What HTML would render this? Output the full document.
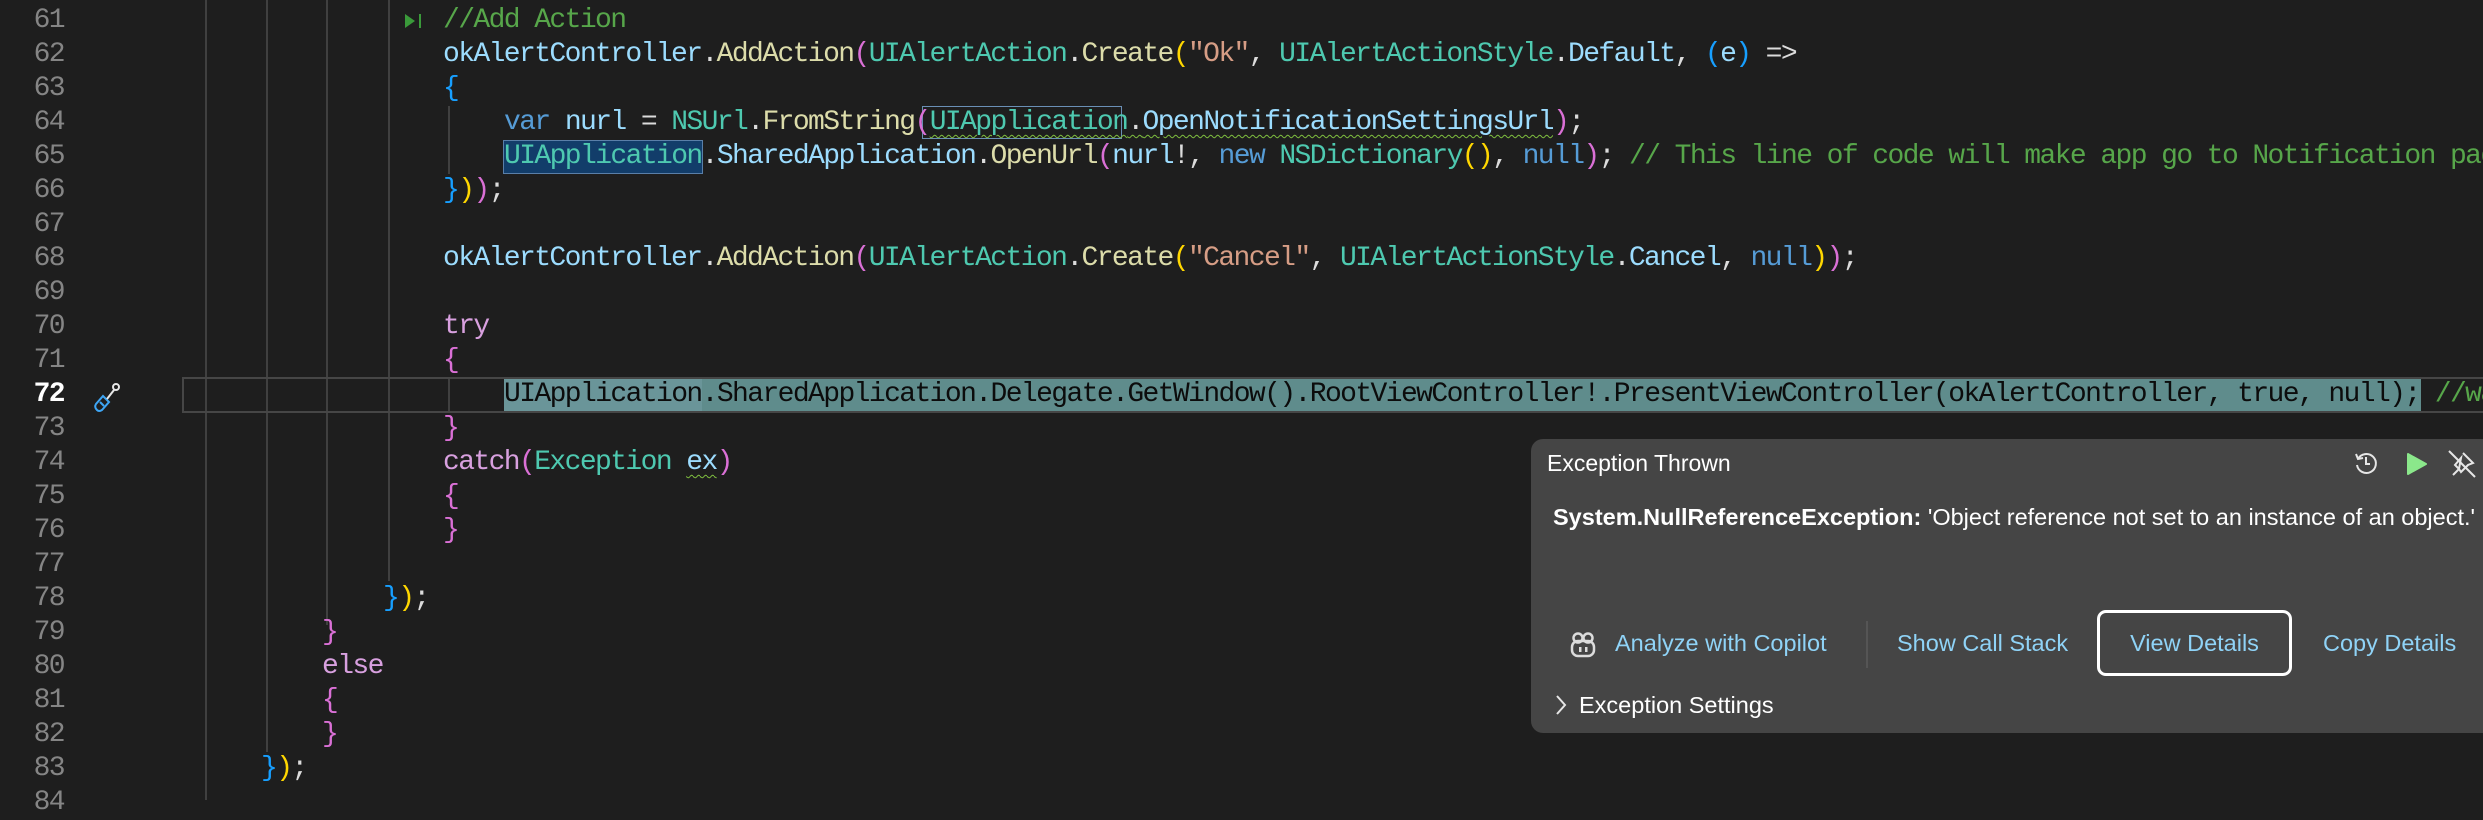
<!DOCTYPE html>
<html><head><meta charset="utf-8">
<style>
html,body{margin:0;padding:0;}
body{width:2483px;height:800px;background:#1e1e1e;position:relative;overflow:hidden;font-family:"Liberation Mono",monospace;}
.ln{position:absolute;left:0;width:64px;text-align:right;color:#858585;font-size:28px;letter-spacing:-1.6px;line-height:34px;}
.l{position:absolute;white-space:pre;font-size:28px;letter-spacing:-1.6px;line-height:34px;color:#dcdcdc;}
.g{position:absolute;width:2px;background:#404040;}
.v{color:#9cdcfe}.m{color:#dcdcaa}.t{color:#4ec9b0}.s{color:#d69d85}.k{color:#569cd6}.c{color:#57a64a}.kw{color:#d8a0df}
.p1{color:#da70d6}.p2{color:#ffd700}.p3{color:#179fff}
.sq{text-decoration:underline wavy #7fbf3f;text-decoration-thickness:1px;text-underline-offset:5px;}
.pop{position:absolute;left:1531px;top:439px;width:980px;height:294px;background:#454545;border-radius:12px;font-family:"Liberation Sans",sans-serif;color:#fff;}
.pt{position:absolute;white-space:nowrap;font-size:23.5px;}
.lk{color:#8fd3f7;}
</style></head><body>
<div class="g" style="left:205px;top:0;height:800px"></div>
<div class="g" style="left:266px;top:0;height:752px"></div>
<div class="g" style="left:326px;top:0;height:625px"></div>
<div class="g" style="left:388px;top:0;height:581px"></div>
<div class="g" style="left:448px;top:106px;height:68px"></div>
<div class="g" style="left:448px;top:378px;height:34px"></div>

<div style="position:absolute;left:182px;top:377px;width:2320px;height:32px;border:2px solid #464646;"></div>
<div style="position:absolute;left:504px;top:379px;width:1917px;height:32px;background:#5f8c8c;"></div>
<div style="position:absolute;left:504px;top:379px;width:198px;height:32px;background:#6a9599;"></div>
<div style="position:absolute;left:503px;top:140px;width:198px;height:32px;background:#123d6a;border:1px solid #5a7fa8;"></div>
<div style="position:absolute;left:922px;top:106px;width:198px;height:31px;border:1px solid #6a8fb5;"></div>

<div class="ln" style="top:4px">61</div>
<div class="ln" style="top:38px">62</div>
<div class="ln" style="top:72px">63</div>
<div class="ln" style="top:106px">64</div>
<div class="ln" style="top:140px">65</div>
<div class="ln" style="top:174px">66</div>
<div class="ln" style="top:208px">67</div>
<div class="ln" style="top:242px">68</div>
<div class="ln" style="top:276px">69</div>
<div class="ln" style="top:310px">70</div>
<div class="ln" style="top:344px">71</div>
<div class="ln" style="top:378px;color:#fff;font-weight:bold">72</div>
<div class="ln" style="top:412px">73</div>
<div class="ln" style="top:446px">74</div>
<div class="ln" style="top:480px">75</div>
<div class="ln" style="top:514px">76</div>
<div class="ln" style="top:548px">77</div>
<div class="ln" style="top:582px">78</div>
<div class="ln" style="top:616px">79</div>
<div class="ln" style="top:650px">80</div>
<div class="ln" style="top:684px">81</div>
<div class="ln" style="top:718px">82</div>
<div class="ln" style="top:752px">83</div>
<div class="ln" style="top:786px">84</div>

<svg style="position:absolute;left:404px;top:12px" width="22" height="18"><polygon points="1,2 11,9 1,16" fill="#3a9a3a"/><rect x="15" y="2" width="2" height="14" fill="#3a9a3a"/></svg>
<svg style="position:absolute;left:92px;top:380px" width="34" height="34" viewBox="0 0 34 34"><g fill="none" stroke-width="2"><path d="M5 30 Q2 27 4 24 L11 16 L17 22 L10 30 Q7 32 5 30 Z" stroke="#3ea6f5"/><path d="M8 22 L12 26" stroke="#3ea6f5"/><path d="M15 19 L22 10" stroke="#e6e6e6"/><circle cx="24" cy="7" r="3" stroke="#e6e6e6"/></g></svg>

<div class="l" style="left:443px;top:4px"><span class="c">//Add Action</span></div>
<div class="l" style="left:443px;top:38px"><span class="v">okAlertController</span>.<span class="m">AddAction</span><span class="p1">(</span><span class="t">UIAlertAction</span>.<span class="m">Create</span><span class="p2">(</span><span class="s">"Ok"</span>, <span class="t">UIAlertActionStyle</span>.<span class="v">Default</span>, <span class="p3">(</span><span class="v">e</span><span class="p3">)</span> =&gt;</div>
<div class="l" style="left:443px;top:72px"><span class="p3">{</span></div>
<div class="l" style="left:504px;top:106px"><span class="k">var</span> <span class="v">nurl</span> = <span class="t">NSUrl</span>.<span class="m">FromString</span><span class="p1">(</span><span class="t sq">UIApplication</span><span class="sq">.<span class="v">OpenNotificationSettingsUrl</span></span><span class="p1">)</span>;</div>
<div class="l" style="left:504px;top:140px"><span class="t">UIApplication</span>.<span class="v">SharedApplication</span>.<span class="m">OpenUrl</span><span class="p1">(</span><span class="v">nurl</span>!, <span class="k">new</span> <span class="t">NSDictionary</span><span class="p2">()</span>, <span class="k">null</span><span class="p1">)</span>; <span class="c">// This line of code will make app go to Notification page</span></div>
<div class="l" style="left:443px;top:174px"><span class="p3">}</span><span class="p2">)</span><span class="p1">)</span>;</div>
<div class="l" style="left:443px;top:242px"><span class="v">okAlertController</span>.<span class="m">AddAction</span><span class="p1">(</span><span class="t">UIAlertAction</span>.<span class="m">Create</span><span class="p2">(</span><span class="s">"Cancel"</span>, <span class="t">UIAlertActionStyle</span>.<span class="v">Cancel</span>, <span class="k">null</span><span class="p2">)</span><span class="p1">)</span>;</div>
<div class="l" style="left:443px;top:310px"><span class="kw">try</span></div>
<div class="l" style="left:443px;top:344px"><span class="p1">{</span></div>
<div class="l" style="left:504px;top:378px;color:#0c0c0c">UIApplication.SharedApplication.Delegate.GetWindow().RootViewController!.PresentViewController(okAlertController, true, null); <span class="c">//wait</span></div>
<div class="l" style="left:443px;top:412px"><span class="p1">}</span></div>
<div class="l" style="left:443px;top:446px"><span class="kw">catch</span><span class="p1">(</span><span class="t">Exception</span> <span class="v sq">ex</span><span class="p1">)</span></div>
<div class="l" style="left:443px;top:480px"><span class="p1">{</span></div>
<div class="l" style="left:443px;top:514px"><span class="p1">}</span></div>
<div class="l" style="left:383px;top:582px"><span class="p3">}</span><span class="p2">)</span>;</div>
<div class="l" style="left:322px;top:616px"><span class="p1">}</span></div>
<div class="l" style="left:322px;top:650px"><span class="kw">else</span></div>
<div class="l" style="left:322px;top:684px"><span class="p1">{</span></div>
<div class="l" style="left:322px;top:718px"><span class="p1">}</span></div>
<div class="l" style="left:261px;top:752px"><span class="p3">}</span><span class="p2">)</span>;</div>

<div class="pop">
  <div class="pt" style="left:16px;top:11px;font-size:23px;">Exception Thrown</div>
  <svg style="position:absolute;left:822px;top:11px" width="26" height="26" viewBox="0 0 26 26"><g fill="none" stroke="#e6e6e6" stroke-width="2"><path d="M5 9 A9.5 9.5 0 1 1 4 15"/><path d="M3 4 L5 9 L10 8"/><path d="M13 7 V14 H17"/></g></svg>
  <svg style="position:absolute;left:874px;top:13px" width="24" height="24" viewBox="0 0 24 24"><path d="M3 2 L21 12 L3 22 Z" fill="#8be88b" stroke="#8be88b" stroke-linejoin="round" stroke-width="2"/></svg>
  <svg style="position:absolute;left:916px;top:10px" width="30" height="30" viewBox="0 0 30 30"><g fill="none" stroke="#e6e6e6" stroke-width="2"><path d="M2 2 L28 28"/><path d="M16 4 L26 14 L21 16 L14 23 L12 20 L6 26 M12 20 L8 16 L14 9 Z"/></g></svg>
  <div class="pt" style="left:22px;top:65px;font-size:23.5px;"><b>System.NullReferenceException:</b> 'Object reference not set to an instance of an object.'</div>
  <svg style="position:absolute;left:38px;top:192px" width="28" height="28" viewBox="0 0 28 28"><g fill="none" stroke="#dcdcdc" stroke-width="2.5"><rect x="3" y="10" width="22" height="15" rx="6"/><circle cx="9" cy="7" r="4.5"/><circle cx="19" cy="7" r="4.5"/></g><rect x="10" y="16" width="2.5" height="5" fill="#dcdcdc"/><rect x="16" y="16" width="2.5" height="5" fill="#dcdcdc"/></svg>
  <div class="pt lk" style="left:84px;top:191px;">Analyze with Copilot</div>
  <div style="position:absolute;left:335px;top:182px;width:2px;height:47px;background:#555"></div>
  <div class="pt lk" style="left:366px;top:191px;">Show Call Stack</div>
  <div style="position:absolute;left:566px;top:171px;width:189px;height:60px;border:3px solid #fff;border-radius:9px;"></div>
  <div class="pt lk" style="left:566px;top:191px;width:195px;text-align:center;">View Details</div>
  <div class="pt lk" style="left:792px;top:191px;">Copy Details</div>
  <svg style="position:absolute;left:24px;top:255px" width="12" height="22" viewBox="0 0 12 22"><path d="M2 2 L10 11 L2 20" fill="none" stroke="#e6e6e6" stroke-width="2"/></svg>
  <div class="pt" style="left:48px;top:253px;">Exception Settings</div>
</div>
</body></html>
